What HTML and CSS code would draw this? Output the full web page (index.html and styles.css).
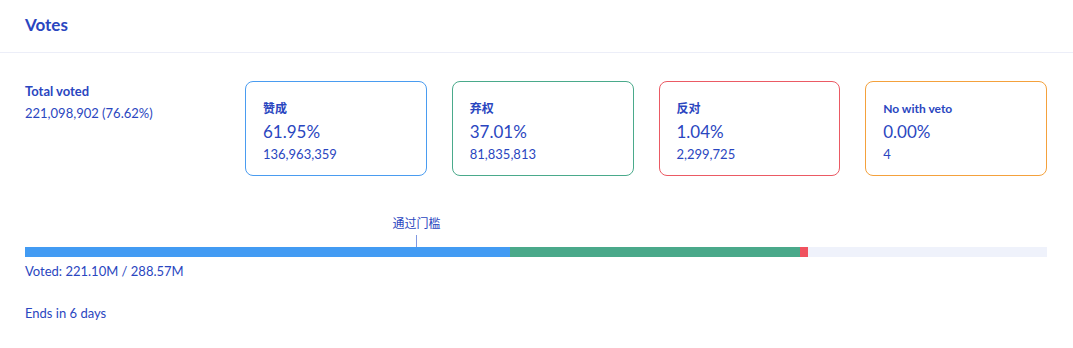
FILE: index.html
```html
<!DOCTYPE html>
<html lang="en">
<head>
  <meta charset="UTF-8">
  <meta name="viewport" content="width=device-width, initial-scale=1.0">
  <title>Votes</title>
  <link rel="stylesheet" href="styles.css">
</head>
<body>
  <div class="panel">
    <div class="panel-header">
      <h2>Votes</h2>
    </div>

    <div class="panel-body">
      <div class="stats">
        <div class="total">
          <div class="total-label">Total voted</div>
          <div class="total-value">221,098,902 (76.62%)</div>
        </div>

        <div class="card card-yes">
          <div class="card-label">赞成</div>
          <div class="card-pct">61.95%</div>
          <div class="card-count">136,963,359</div>
        </div>
        <div class="card card-abstain">
          <div class="card-label">弃权</div>
          <div class="card-pct">37.01%</div>
          <div class="card-count">81,835,813</div>
        </div>
        <div class="card card-no">
          <div class="card-label">反对</div>
          <div class="card-pct">1.04%</div>
          <div class="card-count">2,299,725</div>
        </div>
        <div class="card card-veto">
          <div class="card-label">No with veto</div>
          <div class="card-pct">0.00%</div>
          <div class="card-count">4</div>
        </div>
      </div>

      <div class="progress">
        <!-- threshold = 50% of voted share -->
        <div class="threshold" style="left: 38.31%;">
          <span class="threshold-label">通过门槛</span>
          <span class="threshold-tick"></span>
        </div>
        <div class="bar">
          <span class="seg seg-yes" style="width: 47.47%;"></span>
          <span class="seg seg-abstain" style="width: 28.36%;"></span>
          <span class="seg seg-no" style="width: 0.80%;"></span>
        </div>
      </div>
      <div class="voted">Voted: 221.10M / 288.57M</div>
      <div class="ends">Ends in 6 days</div>
    </div>
  </div>
</body>
</html>
```

FILE: styles.css
```css
body {
  font-family: Lato, 'Noto Sans CJK SC', sans-serif;
  background-color: white;
  color: #2a46c0;
  margin: 0;
  padding: 0;
}
.panel-header {
  height: 53px;
  box-sizing: border-box;
  padding: 14px 25px 0;
  border-bottom: 1px solid #eceef8;
}
.panel-header h2 {
  margin: 0;
  font-size: 17px;
  line-height: 22px;
  font-weight: 700;
}
.panel-body {
  padding: 28px 26px 0 25px;
}
.stats {
  display: grid;
  grid-template-columns: 195px repeat(4, 1fr);
  column-gap: 25px;
}
.total-label {
  font-size: 13px;
  font-weight: 700;
  line-height: 18px;
  margin-top: 1px;
}
.total-value {
  font-size: 13px;
  line-height: 18px;
  margin-top: 4px;
}
.card {
  height: 95px;
  box-sizing: border-box;
  border: 1px solid;
  border-radius: 8px;
  padding: 18px 17px 0;
}
.card-yes { border-color: #4a9cf0; }
.card-abstain { border-color: #4aaa8b; }
.card-no { border-color: #eb5a64; }
.card-veto { border-color: #f4a13c; }
.card-label {
  font-size: 12px;
  font-weight: 700;
  line-height: 18px;
}
.card-pct {
  font-size: 17px;
  line-height: 22px;
  margin-top: 3px;
}
.card-count {
  font-size: 13px;
  line-height: 18px;
  margin-top: 2px;
}
.progress {
  position: relative;
  margin-top: 40px;
  padding-top: 31px;
}
.threshold {
  position: absolute;
  top: 0;
  transform: translateX(-50%);
  display: flex;
  flex-direction: column;
  align-items: center;
}
.threshold-label {
  font-size: 12px;
  line-height: 16px;
  white-space: nowrap;
}
.threshold-tick {
  width: 1px;
  height: 12px;
  margin-top: 3px;
  background-color: #7f98e2;
}
.bar {
  display: flex;
  height: 10px;
  background-color: #eff2fb;
}
.seg { height: 100%; }
.seg-yes { background-color: #429bf3; }
.seg-abstain { background-color: #4aa98a; }
.seg-no { background-color: #f0525f; }
.voted {
  font-size: 13px;
  line-height: 18px;
  margin-top: 5px;
}
.ends {
  font-size: 13px;
  line-height: 18px;
  margin-top: 24px;
}
```
